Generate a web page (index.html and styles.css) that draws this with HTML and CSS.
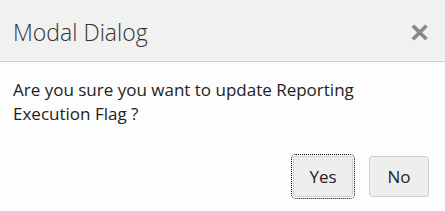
FILE: index.html
```html
<!DOCTYPE html>
<html>
<head>
    <meta charset="utf-8" />
    <title>Modal Dialog</title>
    <link rel="stylesheet" href="styles.css">
</head>
<body>
    <div class="modal">
        <div class="modal-header">
            <h4 class="modal-title">Modal Dialog</h4>
            <button class="close" type="button">&times;</button>
        </div>
        <div class="modal-body">
            <p>Are you sure you want to update Reporting Execution Flag ?</p>
        </div>
        <div class="modal-footer">
            <button class="btn btn-focus" type="button">Yes</button>
            <button class="btn" type="button">No</button>
        </div>
    </div>
</body>
</html>
```

FILE: styles.css
```css
html, body {
    margin: 0;
    padding: 0;
    background: #fdfdfd;
}

.modal {
    width: 445px;
    height: 211px;
    font-family: "Open Sans", "Noto Sans", sans-serif;
    color: #222;
}

.modal-header {
    display: flex;
    align-items: center;
    justify-content: space-between;
    height: 62px;
    padding: 2px 16px 0 13px;
    box-sizing: border-box;
    background: #f1f1f1;
    border-bottom: 1px solid #cfcfcf;
}

.modal-title {
    margin: 0;
    font-size: 23px;
    font-weight: 300;
    color: #333;
}

.close {
    border: none;
    background: none;
    padding: 0;
    font-family: "Liberation Sans", sans-serif;
    font-size: 32px;
    font-weight: bold;
    line-height: 1;
    color: #888;
    cursor: pointer;
}

.modal-body {
    padding: 16px 13px 0 13px;
}

.modal-body p {
    margin: 0;
    font-size: 17px;
    line-height: 24px;
    max-width: 380px;
}

.modal-footer {
    display: flex;
    justify-content: flex-end;
    gap: 16px;
    padding: 30px 16px 0 0;
}

.btn {
    width: 60px;
    height: 41px;
    border: 1px solid #cfcfcf;
    border-radius: 3px;
    background: #eeeeee;
    font-family: "Open Sans", "Noto Sans", sans-serif;
    font-size: 17px;
    color: #222;
}

.btn-focus {
    outline: 1px dotted #000;
    outline-offset: 1px;
}
```
